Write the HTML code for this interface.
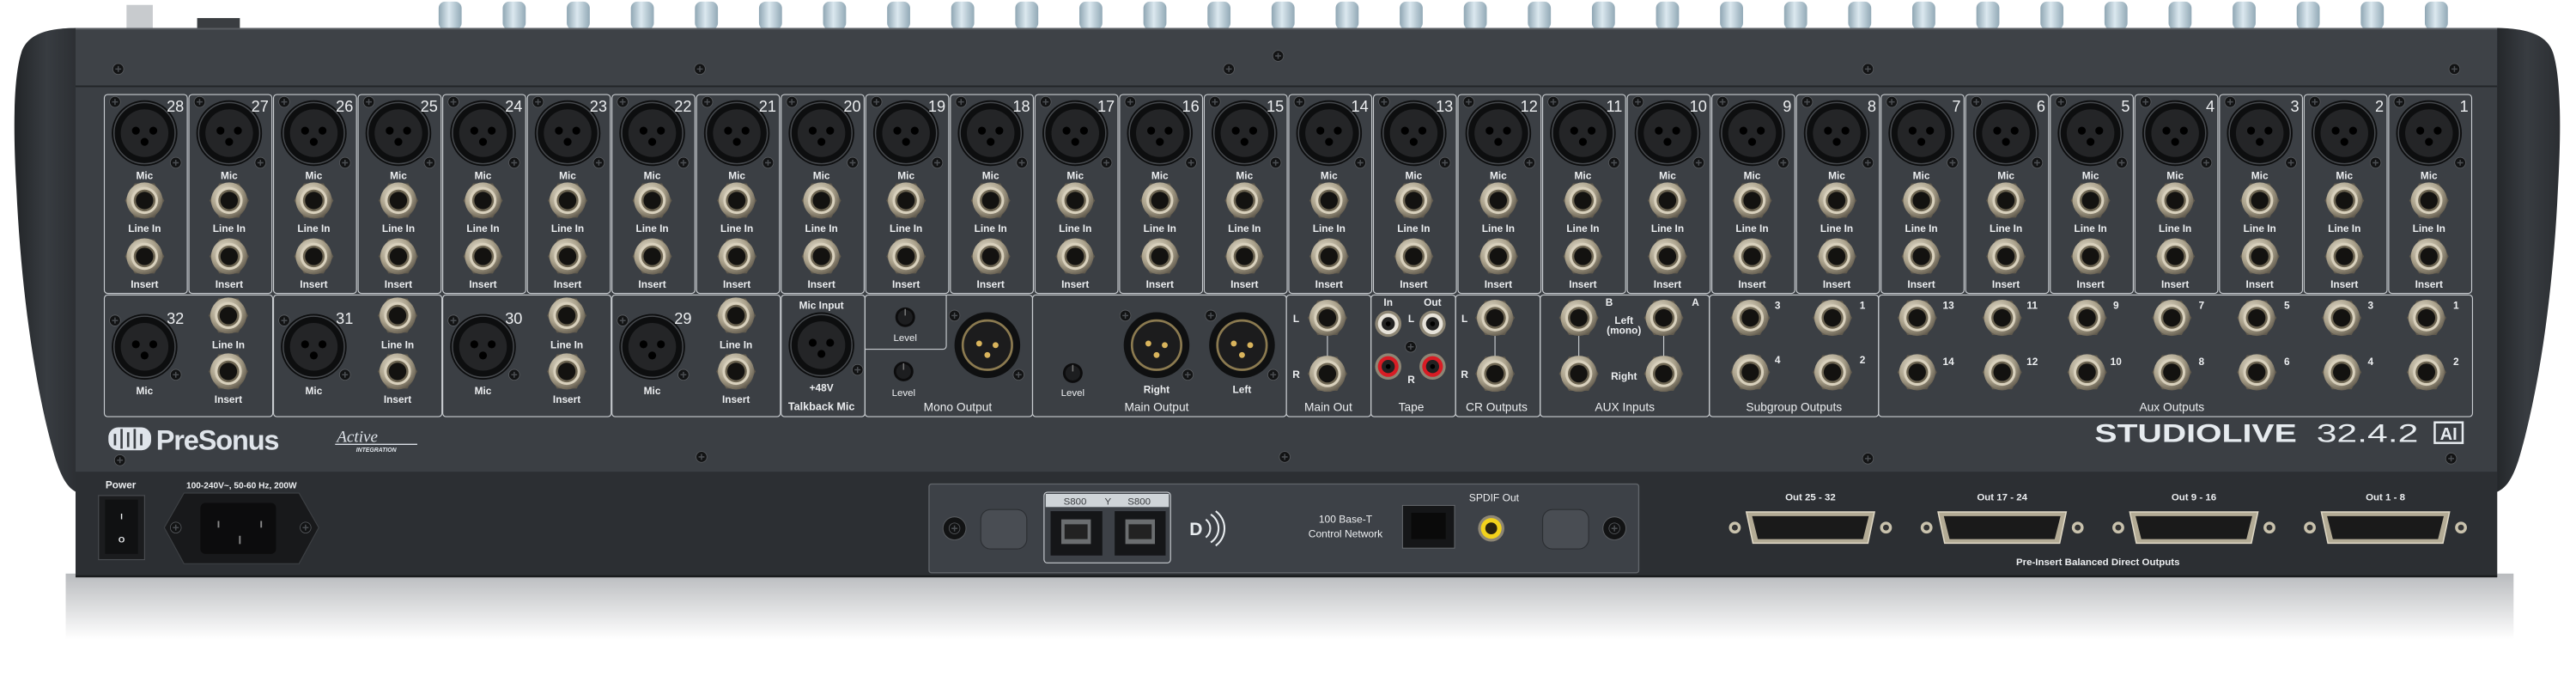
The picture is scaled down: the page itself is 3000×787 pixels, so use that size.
<!DOCTYPE html>
<html><head><meta charset="utf-8"><style>
html,body{margin:0;padding:0;background:#fff;width:3000px;height:787px;overflow:hidden}
svg{display:block}
text{font-family:"Liberation Sans",sans-serif;fill:#eceef0}
.n{font-size:9.5px;text-anchor:end}
.l{font-size:6.2px;text-anchor:middle;font-weight:bold}
.s{font-size:7.2px;text-anchor:middle}
.t{font-size:4.6px;text-anchor:middle}
.k{font-size:6px;text-anchor:middle;font-weight:bold}
</style></head><body>
<svg width="3000" height="787" viewBox="0 0 1568 411.3" preserveAspectRatio="none" xmlns="http://www.w3.org/2000/svg">
<defs>
<linearGradient id="gK" x1="0" x2="1"><stop offset="0" stop-color="#8fa6b3"/><stop offset=".45" stop-color="#dbe8ef"/><stop offset="1" stop-color="#92a9b6"/></linearGradient>
<linearGradient id="gCap" x1="0" x2="1"><stop offset="0" stop-color="#222528"/><stop offset=".5" stop-color="#383c41"/><stop offset="1" stop-color="#2b2e32"/></linearGradient>
<linearGradient id="gSh" x1="0" y1="0" x2="0" y2="1"><stop offset="0" stop-color="#b9bbbe"/><stop offset="1" stop-color="#fff"/></linearGradient>
<radialGradient id="gNut" cx=".4" cy=".35" r=".7"><stop offset="0" stop-color="#ebe5d5"/><stop offset=".6" stop-color="#aaa18b"/><stop offset="1" stop-color="#5f584b"/></radialGradient>
<g id="sc"><circle r="3.3" fill="#121314" stroke="#5a5d61" stroke-width=".4"/><path d="M-1.8,0H1.8M0,-1.8V1.8" stroke="#4a4d51" stroke-width=".8"/></g>
<g id="jk"><polygon points="12,0 6,10.4 -6,10.4 -12,0 -6,-10.4 6,-10.4" fill="#5f594d"/><circle r="11" fill="url(#gNut)"/><circle r="8.2" fill="#d8d0bc"/><circle r="6.6" fill="#6d6552"/><circle r="5.3" fill="#131210"/></g>
<g id="xf"><circle r="20" fill="#0d0e0f"/><circle r="18.6" fill="none" stroke="#45484c" stroke-width=".8"/><circle r="14.5" fill="#242527"/><circle cx="-5.3" cy="-1.5" r="2.4" fill="#000"/><circle cx="5.3" cy="-1.5" r="2.4" fill="#000"/><circle cx="0" cy="5.3" r="2.4" fill="#000"/></g>
<g id="xm"><circle r="20" fill="#0f1011"/><circle r="15" fill="#1c1c1d" stroke="#8b7a50" stroke-width="1.4"/><circle cx="-5" cy="-1" r="1.8" fill="#d9b45c"/><circle cx="5" cy="0" r="1.8" fill="#d9b45c"/><circle cx="0" cy="6" r="1.8" fill="#d9b45c"/></g>
<g id="rca"><circle r="8" fill="#8d8675"/><circle r="6.3" fill="#e7e3da"/><circle r="4" fill="#222"/><circle r="1.5" fill="#000"/></g>
<g id="rcr"><circle r="8" fill="#8d8675"/><circle r="6.3" fill="#d81c24"/><circle r="4" fill="#222"/><circle r="1.5" fill="#000"/></g>
<g id="kn"><circle r="6" fill="#0c0c0d"/><circle r="4.5" fill="#1d1e20"/><path d="M0,-1V-5" stroke="#777" stroke-width=".8"/></g>
<g id="chs"><rect x=".5" y="57.5" width="50.5" height="121" rx="2" fill="none" stroke="#c9cdd1" stroke-width=".6"/><use href="#xf" x="25" y="81"/><use href="#sc" x="7" y="62"/><use href="#sc" x="44" y="99"/><use href="#jk" x="25" y="122"/><use href="#jk" x="25" y="156"/></g>
<g id="lw"><rect x=".5" y="179.5" width="102.5" height="74" rx="2" fill="none" stroke="#c9cdd1" stroke-width=".6"/><use href="#xf" x="25" y="211"/><use href="#sc" x="7" y="195"/><use href="#sc" x="44" y="228"/><use href="#jk" x="76" y="192"/><use href="#jk" x="76" y="226"/></g>
<g id="db"><circle cx="-46" r="3.6" fill="#c9c2ad"/><circle cx="-46" r="1.8" fill="#333"/><circle cx="46" r="3.6" fill="#c9c2ad"/><circle cx="46" r="1.8" fill="#333"/><path d="M-39,-9.5H39L35,9.5H-35Z" fill="#b3ab95" stroke="#e0d9c6" stroke-width=".8"/><path d="M-35.5,-7H35.5L32,7H-32Z" fill="#1a1a1a"/></g>
</defs>

<rect x="40" y="349" width="1490" height="40" fill="url(#gSh)"/>
<rect x="77" y="3" width="16" height="14" fill="#c8cbce"/>
<rect x="120" y="11" width="26" height="6" fill="#3a3d41"/>
<g fill="url(#gK)">
<rect x="267" y="1" width="14" height="17" rx="4"/><rect x="306" y="1" width="14" height="17" rx="4"/><rect x="345" y="1" width="14" height="17" rx="4"/><rect x="384" y="1" width="14" height="17" rx="4"/><rect x="423" y="1" width="14" height="17" rx="4"/><rect x="462" y="1" width="14" height="17" rx="4"/><rect x="501" y="1" width="14" height="17" rx="4"/><rect x="540" y="1" width="14" height="17" rx="4"/><rect x="579" y="1" width="14" height="17" rx="4"/><rect x="618" y="1" width="14" height="17" rx="4"/><rect x="657" y="1" width="14" height="17" rx="4"/><rect x="696" y="1" width="14" height="17" rx="4"/><rect x="735" y="1" width="14" height="17" rx="4"/><rect x="774" y="1" width="14" height="17" rx="4"/><rect x="813" y="1" width="14" height="17" rx="4"/><rect x="852" y="1" width="14" height="17" rx="4"/><rect x="891" y="1" width="14" height="17" rx="4"/><rect x="930" y="1" width="14" height="17" rx="4"/><rect x="969" y="1" width="14" height="17" rx="4"/><rect x="1008" y="1" width="14" height="17" rx="4"/><rect x="1047" y="1" width="14" height="17" rx="4"/><rect x="1086" y="1" width="14" height="17" rx="4"/><rect x="1125" y="1" width="14" height="17" rx="4"/><rect x="1164" y="1" width="14" height="17" rx="4"/><rect x="1203" y="1" width="14" height="17" rx="4"/><rect x="1242" y="1" width="14" height="17" rx="4"/><rect x="1281" y="1" width="14" height="17" rx="4"/><rect x="1320" y="1" width="14" height="17" rx="4"/><rect x="1359" y="1" width="14" height="17" rx="4"/><rect x="1398" y="1" width="14" height="17" rx="4"/><rect x="1437" y="1" width="14" height="17" rx="4"/><rect x="1476" y="1" width="14" height="17" rx="4"/>
</g>

<path d="M48,17 C30,17 17,20 13,32 C8,48 8,80 10,115 C13,180 22,240 34,280 C38,292 42,298 48,300 Z" fill="url(#gCap)"/>
<path d="M1518,17 C1536,17 1550,20 1554,32 C1559,48 1559,80 1557,115 C1554,180 1545,240 1533,280 C1529,292 1525,298 1518,300 Z" fill="url(#gCap)"/>
<rect x="46" y="17" width="1474" height="334" fill="#3b3f44"/>
<rect x="46" y="17" width="1474" height="36" fill="#3e4247"/>
<rect x="46" y="17" width="1474" height="1" fill="#5a5e63"/>
<rect x="46" y="52" width="1474" height="1" fill="#222528"/>
<rect x="46" y="287" width="1474" height="64" fill="#2c2f33"/>
<rect x="46" y="350" width="1474" height="1.3" fill="#1a1c1e"/>

<use href="#sc" x="72" y="42"/><use href="#sc" x="426" y="42"/><use href="#sc" x="748" y="42"/><use href="#sc" x="778" y="34"/><use href="#sc" x="1137" y="42"/><use href="#sc" x="1494" y="42"/>
<use href="#sc" x="73" y="280"/><use href="#sc" x="427" y="278"/><use href="#sc" x="782" y="278"/><use href="#sc" x="1137" y="279"/><use href="#sc" x="1492" y="279"/>

<g transform="translate(63)"><use href="#chs"/><text class="n" x="49" y="68">28</text><text class="l" x="25" y="109">Mic</text><text class="l" x="25" y="141">Line In</text><text class="l" x="25" y="175">Insert</text></g>
<g transform="translate(114.5)"><use href="#chs"/><text class="n" x="49" y="68">27</text><text class="l" x="25" y="109">Mic</text><text class="l" x="25" y="141">Line In</text><text class="l" x="25" y="175">Insert</text></g>
<g transform="translate(166)"><use href="#chs"/><text class="n" x="49" y="68">26</text><text class="l" x="25" y="109">Mic</text><text class="l" x="25" y="141">Line In</text><text class="l" x="25" y="175">Insert</text></g>
<g transform="translate(217.5)"><use href="#chs"/><text class="n" x="49" y="68">25</text><text class="l" x="25" y="109">Mic</text><text class="l" x="25" y="141">Line In</text><text class="l" x="25" y="175">Insert</text></g>
<g transform="translate(269)"><use href="#chs"/><text class="n" x="49" y="68">24</text><text class="l" x="25" y="109">Mic</text><text class="l" x="25" y="141">Line In</text><text class="l" x="25" y="175">Insert</text></g>
<g transform="translate(320.5)"><use href="#chs"/><text class="n" x="49" y="68">23</text><text class="l" x="25" y="109">Mic</text><text class="l" x="25" y="141">Line In</text><text class="l" x="25" y="175">Insert</text></g>
<g transform="translate(372)"><use href="#chs"/><text class="n" x="49" y="68">22</text><text class="l" x="25" y="109">Mic</text><text class="l" x="25" y="141">Line In</text><text class="l" x="25" y="175">Insert</text></g>
<g transform="translate(423.5)"><use href="#chs"/><text class="n" x="49" y="68">21</text><text class="l" x="25" y="109">Mic</text><text class="l" x="25" y="141">Line In</text><text class="l" x="25" y="175">Insert</text></g>
<g transform="translate(475)"><use href="#chs"/><text class="n" x="49" y="68">20</text><text class="l" x="25" y="109">Mic</text><text class="l" x="25" y="141">Line In</text><text class="l" x="25" y="175">Insert</text></g>
<g transform="translate(526.5)"><use href="#chs"/><text class="n" x="49" y="68">19</text><text class="l" x="25" y="109">Mic</text><text class="l" x="25" y="141">Line In</text><text class="l" x="25" y="175">Insert</text></g>
<g transform="translate(578)"><use href="#chs"/><text class="n" x="49" y="68">18</text><text class="l" x="25" y="109">Mic</text><text class="l" x="25" y="141">Line In</text><text class="l" x="25" y="175">Insert</text></g>
<g transform="translate(629.5)"><use href="#chs"/><text class="n" x="49" y="68">17</text><text class="l" x="25" y="109">Mic</text><text class="l" x="25" y="141">Line In</text><text class="l" x="25" y="175">Insert</text></g>
<g transform="translate(681)"><use href="#chs"/><text class="n" x="49" y="68">16</text><text class="l" x="25" y="109">Mic</text><text class="l" x="25" y="141">Line In</text><text class="l" x="25" y="175">Insert</text></g>
<g transform="translate(732.5)"><use href="#chs"/><text class="n" x="49" y="68">15</text><text class="l" x="25" y="109">Mic</text><text class="l" x="25" y="141">Line In</text><text class="l" x="25" y="175">Insert</text></g>
<g transform="translate(784)"><use href="#chs"/><text class="n" x="49" y="68">14</text><text class="l" x="25" y="109">Mic</text><text class="l" x="25" y="141">Line In</text><text class="l" x="25" y="175">Insert</text></g>
<g transform="translate(835.5)"><use href="#chs"/><text class="n" x="49" y="68">13</text><text class="l" x="25" y="109">Mic</text><text class="l" x="25" y="141">Line In</text><text class="l" x="25" y="175">Insert</text></g>
<g transform="translate(887)"><use href="#chs"/><text class="n" x="49" y="68">12</text><text class="l" x="25" y="109">Mic</text><text class="l" x="25" y="141">Line In</text><text class="l" x="25" y="175">Insert</text></g>
<g transform="translate(938.5)"><use href="#chs"/><text class="n" x="49" y="68">11</text><text class="l" x="25" y="109">Mic</text><text class="l" x="25" y="141">Line In</text><text class="l" x="25" y="175">Insert</text></g>
<g transform="translate(990)"><use href="#chs"/><text class="n" x="49" y="68">10</text><text class="l" x="25" y="109">Mic</text><text class="l" x="25" y="141">Line In</text><text class="l" x="25" y="175">Insert</text></g>
<g transform="translate(1041.5)"><use href="#chs"/><text class="n" x="49" y="68">9</text><text class="l" x="25" y="109">Mic</text><text class="l" x="25" y="141">Line In</text><text class="l" x="25" y="175">Insert</text></g>
<g transform="translate(1093)"><use href="#chs"/><text class="n" x="49" y="68">8</text><text class="l" x="25" y="109">Mic</text><text class="l" x="25" y="141">Line In</text><text class="l" x="25" y="175">Insert</text></g>
<g transform="translate(1144.5)"><use href="#chs"/><text class="n" x="49" y="68">7</text><text class="l" x="25" y="109">Mic</text><text class="l" x="25" y="141">Line In</text><text class="l" x="25" y="175">Insert</text></g>
<g transform="translate(1196)"><use href="#chs"/><text class="n" x="49" y="68">6</text><text class="l" x="25" y="109">Mic</text><text class="l" x="25" y="141">Line In</text><text class="l" x="25" y="175">Insert</text></g>
<g transform="translate(1247.5)"><use href="#chs"/><text class="n" x="49" y="68">5</text><text class="l" x="25" y="109">Mic</text><text class="l" x="25" y="141">Line In</text><text class="l" x="25" y="175">Insert</text></g>
<g transform="translate(1299)"><use href="#chs"/><text class="n" x="49" y="68">4</text><text class="l" x="25" y="109">Mic</text><text class="l" x="25" y="141">Line In</text><text class="l" x="25" y="175">Insert</text></g>
<g transform="translate(1350.5)"><use href="#chs"/><text class="n" x="49" y="68">3</text><text class="l" x="25" y="109">Mic</text><text class="l" x="25" y="141">Line In</text><text class="l" x="25" y="175">Insert</text></g>
<g transform="translate(1402)"><use href="#chs"/><text class="n" x="49" y="68">2</text><text class="l" x="25" y="109">Mic</text><text class="l" x="25" y="141">Line In</text><text class="l" x="25" y="175">Insert</text></g>
<g transform="translate(1453.5)"><use href="#chs"/><text class="n" x="49" y="68">1</text><text class="l" x="25" y="109">Mic</text><text class="l" x="25" y="141">Line In</text><text class="l" x="25" y="175">Insert</text></g>

<g transform="translate(63)"><use href="#lw"/><text class="n" x="49" y="197">32</text><text class="l" x="25" y="240">Mic</text><text class="l" x="76" y="212">Line In</text><text class="l" x="76" y="245">Insert</text></g>
<g transform="translate(166)"><use href="#lw"/><text class="n" x="49" y="197">31</text><text class="l" x="25" y="240">Mic</text><text class="l" x="76" y="212">Line In</text><text class="l" x="76" y="245">Insert</text></g>
<g transform="translate(269)"><use href="#lw"/><text class="n" x="49" y="197">30</text><text class="l" x="25" y="240">Mic</text><text class="l" x="76" y="212">Line In</text><text class="l" x="76" y="245">Insert</text></g>
<g transform="translate(372)"><use href="#lw"/><text class="n" x="49" y="197">29</text><text class="l" x="25" y="240">Mic</text><text class="l" x="76" y="212">Line In</text><text class="l" x="76" y="245">Insert</text></g>

<g fill="none" stroke="#c9cdd1" stroke-width=".6">
<rect x="475.5" y="179.5" width="51" height="74" rx="2"/>
<rect x="526.5" y="179.5" width="102" height="74" rx="2"/>
<path d="M526.5,212.5H574a2,2 0 0 0 2,-2V179.5"/>
<rect x="628.5" y="179.5" width="154.5" height="74" rx="2"/>
<rect x="783" y="179.5" width="51.5" height="74" rx="2"/>
<rect x="834.5" y="179.5" width="51.5" height="74" rx="2"/>
<rect x="886" y="179.5" width="51.5" height="74" rx="2"/>
<rect x="937.5" y="179.5" width="103" height="74" rx="2"/>
<rect x="1040.5" y="179.5" width="103" height="74" rx="2"/>
<rect x="1143.5" y="179.5" width="361.5" height="74" rx="2"/>
<path d="M808,200V220M910,200V220M961,200V220M1012.7,200V220"/>
</g>

<text class="l" x="500" y="188">Mic Input</text>
<use href="#xf" x="500" y="210"/><use href="#sc" x="522" y="225"/>
<text class="l" x="500" y="238">+48V</text>
<text class="k" x="500" y="249.5" style="font-size:6.6px">Talkback Mic</text>
<use href="#kn" x="551" y="193"/><text class="t" x="551" y="207.5" style="font-size:6px">Level</text>
<use href="#kn" x="550" y="226"/><text class="t" x="550" y="241" style="font-size:6px">Level</text>
<use href="#xm" x="601" y="210"/><use href="#sc" x="581" y="192"/><use href="#sc" x="620" y="228"/>
<text class="s" x="583" y="250">Mono Output</text>
<use href="#kn" x="653" y="227"/><text class="t" x="653" y="241" style="font-size:6px">Level</text>
<use href="#xm" x="704" y="210"/><use href="#xm" x="756" y="210"/>
<use href="#sc" x="685" y="192"/><use href="#sc" x="737" y="192"/><use href="#sc" x="723" y="228"/><use href="#sc" x="775" y="228"/>
<text class="l" x="704" y="239">Right</text><text class="l" x="756" y="239">Left</text>
<text class="s" x="704" y="250">Main Output</text>
<use href="#jk" x="808" y="193.4"/><use href="#jk" x="808" y="227.4"/>
<text class="l" x="789" y="196">L</text><text class="l" x="789" y="230">R</text>
<text class="s" x="808.5" y="250">Main Out</text>
<use href="#rca" x="845" y="197"/><use href="#rca" x="872" y="197"/><use href="#rcr" x="845" y="223"/><use href="#rcr" x="872" y="223"/>
<use href="#sc" x="858.7" y="211"/>
<text class="l" x="845" y="186">In</text><text class="l" x="872" y="186">Out</text>
<text class="l" x="859" y="196">L</text><text class="l" x="859" y="233">R</text>
<text class="s" x="859" y="250">Tape</text>
<use href="#jk" x="910" y="193.4"/><use href="#jk" x="910" y="227.4"/>
<text class="l" x="891.5" y="196">L</text><text class="l" x="891.5" y="230">R</text>
<text class="s" x="911" y="250">CR Outputs</text>
<use href="#jk" x="961" y="193.4"/><use href="#jk" x="1012.7" y="193.4"/><use href="#jk" x="961" y="227.4"/><use href="#jk" x="1012.7" y="227.4"/>
<text class="l" x="979.5" y="186">B</text><text class="l" x="1032" y="186">A</text>
<text class="l" x="988.5" y="197">Left</text><text class="l" x="988.5" y="203">(mono)</text><text class="l" x="988.5" y="231">Right</text>
<text class="s" x="989" y="250">AUX Inputs</text>
<use href="#jk" x="1065.4" y="193.4"/><use href="#jk" x="1115.4" y="193.4"/><use href="#jk" x="1065.4" y="226.5"/><use href="#jk" x="1115.4" y="226.5"/>
<text class="l" x="1082" y="188">3</text><text class="l" x="1133.7" y="188">1</text><text class="l" x="1082" y="221">4</text><text class="l" x="1133.7" y="221">2</text>
<text class="s" x="1092" y="250">Subgroup Outputs</text>
<use href="#jk" x="1167" y="193.4"/><use href="#jk" x="1218.7" y="193.4"/><use href="#jk" x="1270.4" y="193.4"/><use href="#jk" x="1322" y="193.4"/><use href="#jk" x="1373.7" y="193.4"/><use href="#jk" x="1425.4" y="193.4"/><use href="#jk" x="1477" y="193.4"/>
<use href="#jk" x="1167" y="226.5"/><use href="#jk" x="1218.7" y="226.5"/><use href="#jk" x="1270.4" y="226.5"/><use href="#jk" x="1322" y="226.5"/><use href="#jk" x="1373.7" y="226.5"/><use href="#jk" x="1425.4" y="226.5"/><use href="#jk" x="1477" y="226.5"/>
<text class="l" x="1186" y="188">13</text><text class="l" x="1237" y="188">11</text><text class="l" x="1288" y="188">9</text><text class="l" x="1340" y="188">7</text><text class="l" x="1392" y="188">5</text><text class="l" x="1443" y="188">3</text><text class="l" x="1495" y="188">1</text>
<text class="l" x="1186" y="222">14</text><text class="l" x="1237" y="222">12</text><text class="l" x="1288" y="222">10</text><text class="l" x="1340" y="222">8</text><text class="l" x="1392" y="222">6</text><text class="l" x="1443" y="222">4</text><text class="l" x="1495" y="222">2</text>
<text class="s" x="1322" y="250">Aux Outputs</text>

<g fill="#dfe4ea"><rect x="66" y="260" width="26" height="14" rx="6"/></g>
<path d="M70,264V271M74,261V273M78,263V272M82,261V273M86,264V271" stroke="#3b3f44" stroke-width="1.4"/>
<text x="95" y="273.5" style="font-size:17px;font-weight:bold;fill:#dfe4ea;letter-spacing:-.6px">PreSonus</text>
<text x="205" y="269" style="font-size:10px;font-style:italic;font-family:'Liberation Serif',serif;fill:#dfe4ea">Active</text>
<rect x="204" y="270" width="50" height=".7" fill="#dfe4ea"/>
<text x="229" y="275" style="font-size:3.6px;font-weight:bold;font-style:italic;text-anchor:middle;fill:#dfe4ea">INTEGRATION</text>
<text x="1275" y="269" textLength="123" lengthAdjust="spacingAndGlyphs" style="font-size:15.5px;font-weight:bold;fill:#e6ebef">STUDIOLIVE</text>
<text x="1410" y="269" textLength="62" lengthAdjust="spacingAndGlyphs" style="font-size:15.5px;fill:#e6ebef">32.4.2</text>
<rect x="1482" y="257" width="17" height="12.5" fill="none" stroke="#e6ebef" stroke-width="1.3"/>
<text x="1490.5" y="267.5" style="font-size:10.5px;font-weight:bold;text-anchor:middle;fill:#e6ebef">AI</text>

<text class="l" x="73.5" y="297">Power</text>
<rect x="60" y="301.5" width="28" height="39" fill="#1b1c1e" stroke="#4a4d51" stroke-width=".6"/>
<rect x="64" y="304" width="20" height="33" fill="#101112"/>
<text class="l" x="74" y="316" style="font-size:5px">I</text><text class="l" x="74" y="330" style="font-size:5px">O</text>
<text class="l" x="147" y="297" style="font-size:5.3px">100-240V~, 50-60 Hz, 200W</text>
<path d="M112,300H182L194,321L182,343H112L100,321Z" fill="#18191b" stroke="#3d4044" stroke-width=".6"/>
<rect x="122" y="306" width="46" height="31" rx="3" fill="#0c0c0d"/>
<use href="#sc" x="107" y="321"/><use href="#sc" x="186" y="321"/>
<path d="M133,317V321M159,317V321M146,326V331" stroke="#888" stroke-width="1"/>

<rect x="565.5" y="294.5" width="432" height="54" rx="1.5" fill="#3d4147" stroke="#62666b" stroke-width=".7"/>
<circle cx="581" cy="321.5" r="7" fill="#121314" stroke="#5a5d61" stroke-width=".5"/><use href="#sc" x="581" y="321.5"/>
<rect x="597" y="310" width="28" height="24" rx="6" fill="#494d53" stroke="#2b2e32" stroke-width=".6"/>
<circle cx="982.7" cy="321.5" r="7" fill="#121314" stroke="#5a5d61" stroke-width=".5"/><use href="#sc" x="982.7" y="321.5"/>
<rect x="939" y="310" width="28" height="24" rx="6" fill="#494d53" stroke="#2b2e32" stroke-width=".6"/>
<rect x="635.5" y="299.5" width="77" height="43" rx="2" fill="none" stroke="#c9cdd1" stroke-width=".6"/>
<rect x="636.5" y="300.5" width="75" height="8" fill="#cfd4d8"/>
<text x="654.4" y="307" style="font-size:6px;text-anchor:middle;fill:#3a3d41">S800</text>
<text x="693.4" y="307" style="font-size:6px;text-anchor:middle;fill:#3a3d41">S800</text>
<text x="674.4" y="307" style="font-size:6px;text-anchor:middle;fill:#3a3d41">Y</text>
<rect x="639.5" y="311" width="31.5" height="27" fill="#151618"/><rect x="678.5" y="311" width="31" height="27" fill="#151618"/>
<rect x="646" y="316" width="18" height="15" fill="#6b6e70"/><rect x="685" y="316" width="18" height="15" fill="#6b6e70"/>
<rect x="648" y="319" width="14" height="9" fill="#222"/><rect x="687" y="319" width="14" height="9" fill="#222"/>
<text x="724" y="325.5" style="font-size:11px;font-weight:bold;fill:#e8ecef">D</text>
<path d="M734,316a7,7 0 0 1 0,11M737,313a10,10 0 0 1 0,17M740,311a13,13 0 0 1 0,21" fill="none" stroke="#e8ecef" stroke-width="1.1"/>
<text class="s" x="819" y="318" style="font-size:6.3px">100 Base-T</text>
<text class="s" x="819" y="327" style="font-size:6.3px">Control Network</text>
<rect x="853.7" y="307.5" width="31.7" height="26" fill="#151618" stroke="#6a6e72" stroke-width=".5"/>
<rect x="859" y="312" width="21" height="16" fill="#0a0a0a"/>
<text class="s" x="909.4" y="305" style="font-size:6.3px">SPDIF Out</text>
<circle cx="907.7" cy="321.5" r="8" fill="#8d8675"/><circle cx="907.7" cy="321.5" r="6.3" fill="#f2d21c"/><circle cx="907.7" cy="321.5" r="3.6" fill="#2a2410"/>

<text class="k" x="1102" y="304.5">Out 25 - 32</text><text class="k" x="1218.7" y="304.5">Out 17 - 24</text><text class="k" x="1335.4" y="304.5">Out 9 - 16</text><text class="k" x="1452" y="304.5">Out 1 - 8</text>
<use href="#db" x="1102" y="321"/><use href="#db" x="1218.7" y="321"/><use href="#db" x="1335.4" y="321"/><use href="#db" x="1452" y="321"/>
<text class="k" x="1277" y="344">Pre-Insert Balanced Direct Outputs</text>
</svg>
</body></html>
